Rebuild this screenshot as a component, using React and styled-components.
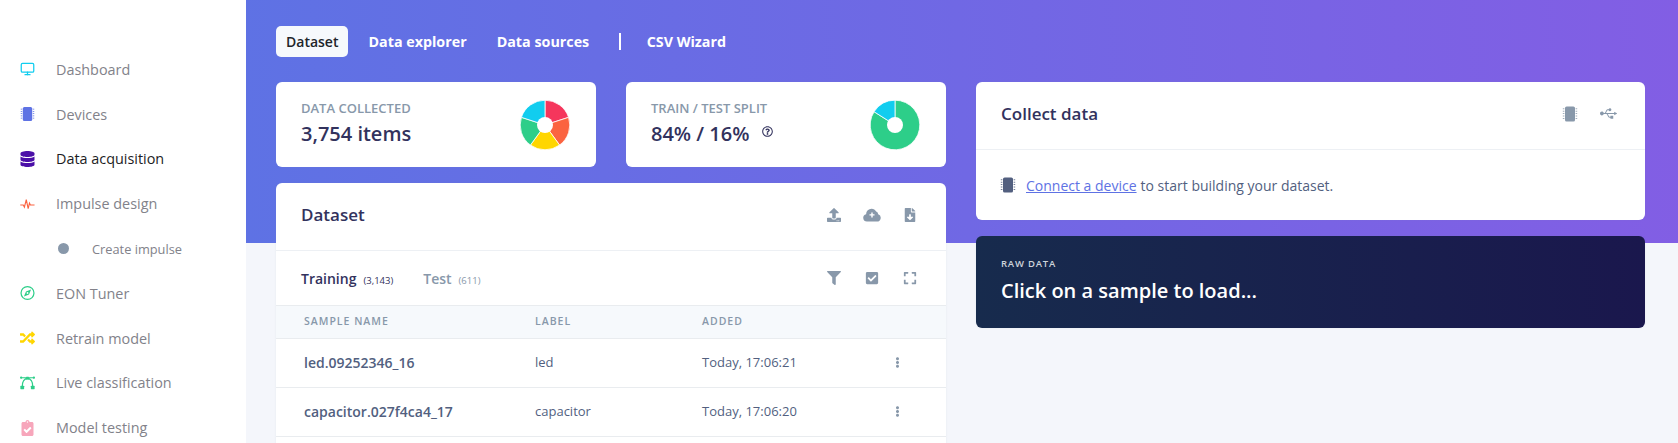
import React from "react";
import styled, { createGlobalStyle } from "styled-components";
import {
  FaDatabase,
  FaRandom,
  FaClipboardCheck,
  FaUpload,
  FaFileDownload,
  FaFilter,
  FaCheckSquare,
  FaExpand,
  FaUsb,
  FaRegQuestionCircle,
  FaEllipsisV,
} from "react-icons/fa";
import { FiMonitor } from "react-icons/fi";

const GlobalStyle = createGlobalStyle`
  html, body {
    margin: 0;
    padding: 0;
    background: #fff;
    font-family: "Open Sans", "Liberation Sans", sans-serif;
  }
  * { box-sizing: border-box; }
`;

const Page = styled.div`
  display: flex;
  width: 1678px;
  height: 443px;
  overflow: hidden;
`;

const Sidebar = styled.nav`
  flex: 0 0 246px;
  padding-top: 47px;
  background: #fff;
`;

const NavRow = styled.div`
  display: flex;
  align-items: center;
  height: 44.8px;
  padding-left: ${(p) => (p.$sub ? "58px" : "20px")};
  font-size: ${(p) => (p.$sub ? "12.8px" : "14.4px")};
  color: ${(p) => (p.$active ? "#1c1c24" : "#82828a")};
`;

const NavIcon = styled.span`
  display: flex;
  align-items: center;
  justify-content: center;
  width: 15px;
  height: 16px;
  margin-right: 21px;
  color: ${(p) => p.$color};
  font-size: 16px;
`;

const SubDot = styled.span`
  width: 11px;
  height: 11px;
  margin-right: 23px;
  border-radius: 50%;
  background: #8898aa;
`;

const Main = styled.main`
  flex: 1;
  position: relative;
  background: linear-gradient(
    87deg,
    #5e72e4 0%,
    #825ee4 100%
  ) no-repeat top / 100% 243px #f4f6fb;
  padding: 26px 33px 0 30px;
`;

const Tabs = styled.div`
  display: flex;
  align-items: center;
  height: 31px;
  gap: 10px;
  margin-bottom: 25px;
`;

const Tab = styled.div`
  display: flex;
  align-items: center;
  height: 31px;
  padding: 0 10px;
  border-radius: 5px;
  font-size: ${(p) => (p.$active ? "14px" : "14.3px")};
  font-weight: ${(p) => (p.$active ? 600 : 700)};
  color: ${(p) => (p.$active ? "#212529" : "#fff")};
  background: ${(p) => (p.$active ? "#f6f9fc" : "transparent")};
`;

const TabDivider = styled.span`
  width: 1.5px;
  height: 17px;
  margin: 0 6px 0 10px;
  background: #fff;
`;

const Columns = styled.div`
  display: grid;
  grid-template-columns: 670px 669px;
  gap: 30px;
`;

const Column = styled.div`
  display: flex;
  flex-direction: column;
  gap: 16px;
`;

const StatRow = styled.div`
  display: grid;
  grid-template-columns: 320px 320px;
  gap: 30px;
`;

const Card = styled.section`
  background: #fff;
  border-radius: 6px;
  box-shadow: 0 0 2px rgba(136, 152, 170, 0.15);
`;

const StatCard = styled(Card)`
  display: flex;
  align-items: center;
  justify-content: space-between;
  height: 85px;
  padding: 0 26px 0 25px;
`;

const StatText = styled.div`
  padding-bottom: 2px;
`;

const StatLabel = styled.div`
  font-size: 13px;
  font-weight: 600;
  line-height: 16px;
  color: #8898aa;
  text-transform: uppercase;
`;

const StatValue = styled.div`
  display: flex;
  align-items: center;
  margin-top: 4px;
  font-size: 20px;
  font-weight: 600;
  line-height: 27px;
  color: #32325d;
`;

const HelpIcon = styled(FaRegQuestionCircle)`
  margin: 0 0 4px 12px;
  font-size: 11px;
  color: #32325d;
`;

const CardHeader = styled.header`
  display: flex;
  align-items: center;
  justify-content: space-between;
  height: 68px;
  padding: 0 25px 4px;
  border-bottom: 1px solid #edf0f4;
`;

const CardTitle = styled.h3`
  margin: 0;
  font-size: 17px;
  font-weight: 600;
  color: #32325d;
`;

const IconGroup = styled.div`
  display: flex;
  align-items: center;
  gap: ${(p) => p.$gap || 24}px;
  margin-right: ${(p) => p.$inset || 0}px;
  color: #8898aa;
  font-size: 14px;
`;

const IconSlot = styled.span`
  display: flex;
  flex-shrink: 0;
  align-items: center;
  justify-content: center;
  width: 14px;
`;

const DataTabs = styled.div`
  display: flex;
  align-items: center;
  justify-content: space-between;
  height: 55px;
  padding: 0 25px;
  border-bottom: 1px solid #e9ecef;
`;

const DataTabList = styled.div`
  display: flex;
  align-items: baseline;
  gap: 30px;
`;

const DataTab = styled.span`
  font-size: 14px;
  font-weight: 600;
  color: ${(p) => (p.$active ? "#32325d" : "#8898aa")};
  small {
    margin-left: 7px;
    font-size: 9.5px;
    font-weight: 400;
    color: ${(p) => (p.$active ? "#32325d" : "#8898aa")};
  }
`;

const TableGrid = styled.div`
  display: grid;
  grid-template-columns: 231px 167px 190px auto;
  align-items: center;
  padding-left: 28px;
  padding-bottom: 2px;
  border-bottom: 1px solid #e9ecef;
`;

const TableHead = styled(TableGrid)`
  height: 33px;
  background: #f6f9fc;
  font-size: 10.5px;
  font-weight: 600;
  letter-spacing: 1px;
  color: #8898aa;
  text-transform: uppercase;
`;

const TableRow = styled(TableGrid)`
  height: 49px;
  font-size: 13px;
  color: #525f7f;
`;

const SampleName = styled.span`
  font-size: 14px;
  font-weight: 600;
`;

const RowMenu = styled.span`
  display: flex;
  font-size: 11px;
  color: #8898aa;
`;

const CollectBody = styled.div`
  display: flex;
  align-items: center;
  height: 70px;
  padding: 0 24px;
  font-size: 14px;
  color: #525f7f;
  a {
    margin: 0 4px 0 10px;
    color: #5e72e4;
    text-decoration: underline;
  }
`;

const RawCard = styled(Card)`
  height: 92px;
  padding: 21px 25px 0;
  background: linear-gradient(87deg, #172b4d 0%, #1a174d 100%);
`;

const RawLabel = styled.div`
  font-size: 9.5px;
  font-weight: 600;
  line-height: 14px;
  letter-spacing: 0.8px;
  color: #ced4da;
  text-transform: uppercase;
`;

const RawTitle = styled.div`
  margin-top: 6px;
  font-size: 20px;
  font-weight: 600;
  line-height: 27px;
  color: #fff;
`;

// small chip, same shape everywhere in the app
const Chip = ({ color, size = 16 }) => (
  <svg width={size} height={size} viewBox="0 0 16 16" fill={color}>
    <rect x="3" y="0.5" width="10" height="15" rx="1.6" />
    {[2.8, 5.2, 7.6, 10, 12.4].map((y) => (
      <g key={y}>
        <rect x="0.8" y={y - 0.4} width="1.6" height="0.8" />
        <rect x="13.6" y={y - 0.4} width="1.6" height="0.8" />
      </g>
    ))}
  </svg>
);

const Pulse = () => (
  <svg width="16" height="12" viewBox="0 0 16 12" fill="none" stroke="#fb6340" strokeWidth="1.2">
    <path d="M0.3 7h3.2l1.2 2.4 2-8 2 9.6 1.4-6 1 2h4.4" />
  </svg>
);

const Compass = () => (
  <svg width="16" height="16" viewBox="0 0 16 16">
    <circle cx="8" cy="8" r="6.9" fill="none" stroke="#2dce89" strokeWidth="1.3" />
    <path fill="#2dce89" d="M11.8 4.2 9.6 9.6 4.2 11.8 6.4 6.4z" />
    <circle cx="8" cy="8" r="1" fill="#fff" />
  </svg>
);

const BezierArch = () => (
  <svg width="16" height="15" viewBox="0 0 16 15">
    <path fill="none" stroke="#2dce89" strokeWidth="1.2" d="M2.4 12C2.4 6 5 3.4 8 3.4s5.6 2.6 5.6 8.6M0.8 2.4h14.4" />
    <rect x="0.4" y="11" width="4" height="3.6" rx="0.5" fill="#2dce89" />
    <rect x="11.6" y="11" width="4" height="3.6" rx="0.5" fill="#2dce89" />
    <circle cx="1.2" cy="2.4" r="1.2" fill="#2dce89" />
    <circle cx="14.8" cy="2.4" r="1.2" fill="#2dce89" />
    <rect x="6.4" y="1.4" width="3.2" height="3" rx="0.5" fill="#2dce89" />
  </svg>
);

const CloudPlus = () => (
  <svg width="18" height="14" viewBox="0 0 18 14" style={{ flexShrink: 0 }}>
    <path
      fill="#8898aa"
      d="M4 13.5a3.7 3.7 0 0 1-.9-7.3A5.4 5.4 0 0 1 8.6.8c2 0 3.7 1.1 4.6 2.8a3 3 0 0 1 2 2.7A3.7 3.7 0 0 1 14 13.5z"
    />
    <path stroke="#fff" strokeWidth="1.4" d="M9 4.4v5M6.5 6.9h5" />
  </svg>
);

const polar = (cx, cy, r, deg) => {
  const a = ((deg - 90) * Math.PI) / 180;
  return [cx + r * Math.cos(a), cy + r * Math.sin(a)];
};

const slicePath = (from, to) => {
  const [x1, y1] = polar(25, 25, 24.8, from);
  const [x2, y2] = polar(25, 25, 24.8, to);
  const large = to - from > 180 ? 1 : 0;
  return `M25 25L${x1} ${y1}A24.8 24.8 0 ${large} 1 ${x2} ${y2}Z`;
};

const Donut = ({ slices }) => {
  let start = 0;
  return (
    <svg width="50" height="50" viewBox="0 0 50 50">
      {slices.map((s) => {
        const from = start;
        start += s.share * 360;
        return (
          <path
            key={s.color}
            d={slicePath(from, start)}
            fill={s.color}
            stroke="#fff"
            strokeWidth="0.8"
          />
        );
      })}
      <circle cx="25" cy="25" r="8" fill="#fff" />
    </svg>
  );
};

const collectedSlices = [
  { color: "#f5365c", share: 0.2 },
  { color: "#fb6340", share: 0.2 },
  { color: "#ffd600", share: 0.2 },
  { color: "#2dce89", share: 0.2 },
  { color: "#11cdef", share: 0.2 },
];

const splitSlices = [
  { color: "#2dce89", share: 0.84 },
  { color: "#11cdef", share: 0.16 },
];

const navItems = [
  { label: "Dashboard", color: "#11cdef", icon: <FiMonitor /> },
  { label: "Devices", color: "#5e72e4", icon: <Chip color="#5e72e4" /> },
  { label: "Data acquisition", color: "#4b0fa8", icon: <FaDatabase />, active: true },
  { label: "Impulse design", color: "#fb6340", icon: <Pulse /> },
  { label: "Create impulse", sub: true },
  { label: "EON Tuner", color: "#2dce89", icon: <Compass /> },
  { label: "Retrain model", color: "#ffd600", icon: <FaRandom /> },
  { label: "Live classification", color: "#2dce89", icon: <BezierArch /> },
  { label: "Model testing", color: "#f7a6bb", icon: <FaClipboardCheck /> },
];

const samples = [
  { name: "led.09252346_16", label: "led", added: "Today, 17:06:21" },
  { name: "capacitor.027f4ca4_17", label: "capacitor", added: "Today, 17:06:20" },
];

export default function App() {
  return (
    <Page>
      <GlobalStyle />
      <Sidebar>
        {navItems.map((item) =>
          item.sub ? (
            <NavRow key={item.label} $sub>
              <SubDot />
              {item.label}
            </NavRow>
          ) : (
            <NavRow key={item.label} $active={item.active}>
              <NavIcon $color={item.color}>{item.icon}</NavIcon>
              {item.label}
            </NavRow>
          )
        )}
      </Sidebar>
      <Main>
        <Tabs>
          <Tab $active>Dataset</Tab>
          <Tab>Data explorer</Tab>
          <Tab>Data sources</Tab>
          <TabDivider />
          <Tab>CSV Wizard</Tab>
        </Tabs>
        <Columns>
          <Column>
            <StatRow>
              <StatCard>
                <StatText>
                  <StatLabel>Data collected</StatLabel>
                  <StatValue>3,754 items</StatValue>
                </StatText>
                <Donut slices={collectedSlices} />
              </StatCard>
              <StatCard>
                <StatText>
                  <StatLabel>Train / test split</StatLabel>
                  <StatValue>
                    84% / 16%
                    <HelpIcon />
                  </StatValue>
                </StatText>
                <Donut slices={splitSlices} />
              </StatCard>
            </StatRow>
            <Card>
              <CardHeader>
                <CardTitle>Dataset</CardTitle>
                <IconGroup $inset={4}>
                  <IconSlot><FaUpload /></IconSlot>
                  <IconSlot><CloudPlus /></IconSlot>
                  <IconSlot><FaFileDownload /></IconSlot>
                </IconGroup>
              </CardHeader>
              <DataTabs>
                <DataTabList>
                  <DataTab $active>Training<small>(3,143)</small></DataTab>
                  <DataTab>Test<small>(611)</small></DataTab>
                </DataTabList>
                <IconGroup $inset={4}>
                  <IconSlot><FaFilter /></IconSlot>
                  <IconSlot><FaCheckSquare /></IconSlot>
                  <IconSlot><FaExpand /></IconSlot>
                </IconGroup>
              </DataTabs>
              <TableHead>
                <span>Sample name</span>
                <span>Label</span>
                <span>Added</span>
              </TableHead>
              {samples.map((s) => (
                <TableRow key={s.name}>
                  <SampleName>{s.name}</SampleName>
                  <span>{s.label}</span>
                  <span>{s.added}</span>
                  <RowMenu><FaEllipsisV /></RowMenu>
                </TableRow>
              ))}
              <TableRow />
            </Card>
          </Column>
          <Column>
            <Card>
              <CardHeader>
                <CardTitle>Collect data</CardTitle>
                <IconGroup $gap={22} $inset={3}>
                  <Chip color="#8898aa" />
                  <FaUsb size={17} />
                </IconGroup>
              </CardHeader>
              <CollectBody>
                <Chip color="#525f7f" />
                <a>Connect a device</a> to start building your dataset.
              </CollectBody>
            </Card>
            <RawCard>
              <RawLabel>Raw data</RawLabel>
              <RawTitle>Click on a sample to load...</RawTitle>
            </RawCard>
          </Column>
        </Columns>
      </Main>
    </Page>
  );
}
